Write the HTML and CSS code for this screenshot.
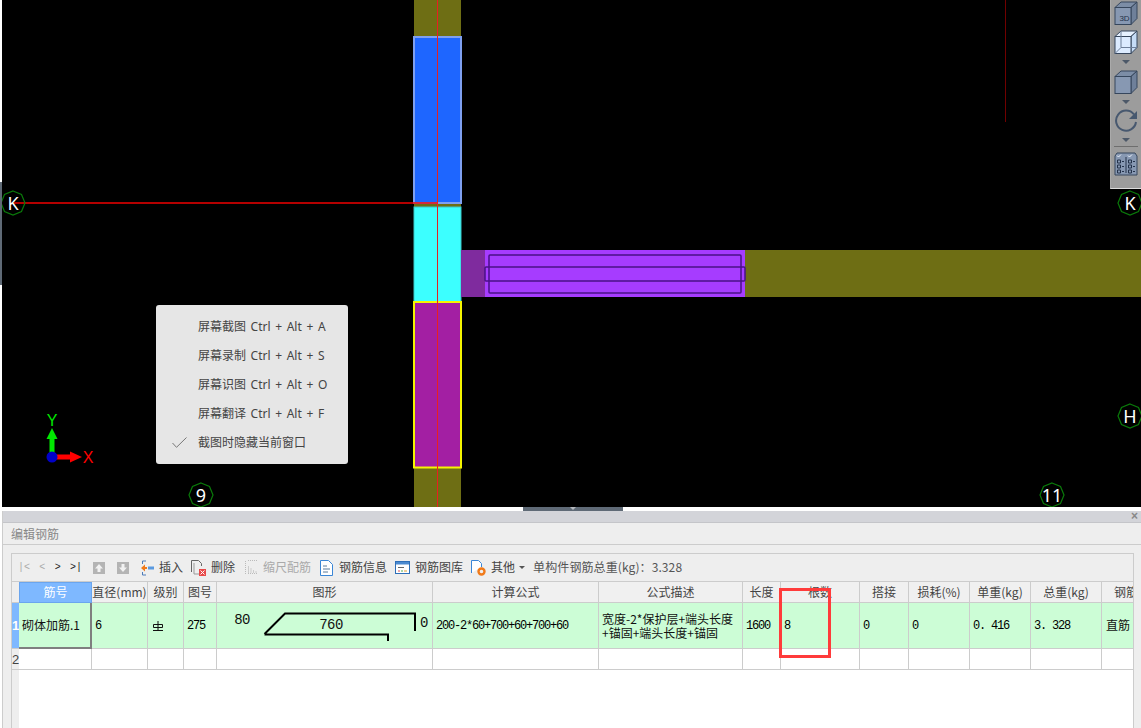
FILE: index.html
```html
<!DOCTYPE html>
<html lang="zh-CN">
<head>
<meta charset="utf-8">
<title>编辑钢筋</title>
<link rel="stylesheet" href="styles.css">
</head>
<body>
<div class="viewport">
  <div class="split-v"><span class="split-v-handle"></span></div>
  <div class="canvas">
    <svg class="drawing" width="1139" height="507" viewBox="2 0 1139 507">
      <rect x="414" y="0" width="47" height="507" fill="#6e6e14"/>
      <rect x="414" y="207" width="47" height="95" fill="#3cffff" stroke="#3cc8c8"/>
      <rect x="414" y="37" width="47" height="166" fill="#1e66ff" stroke="#7fa0f0" stroke-width="2"/>
      <rect x="414" y="302" width="47" height="165.500" fill="#a31fa3" stroke="#f5f500" stroke-width="2"/>
      <rect x="461" y="250" width="680" height="47" fill="#6e6e14"/>
      <rect x="461" y="250" width="24" height="47" fill="#7f2b9e"/>
      <rect x="485" y="250" width="260" height="47" fill="#a63cff"/>
      <rect x="489" y="255" width="252" height="38" fill="none" stroke="#4a1088" stroke-width="1.500" rx="1"/>
      <rect x="485" y="267" width="260" height="14" fill="none" stroke="#4a1088" stroke-width="1.500" rx="1"/>
      <line x1="437.500" y1="0" x2="437.500" y2="507" stroke="#e82020"/>
      <line x1="14" y1="203" x2="437" y2="203" stroke="#f00000" stroke-width="1.500"/>
      <line x1="1005.500" y1="0" x2="1005.500" y2="122" stroke="#700000"/>

      <g class="marker">
        <polygon points="13,191 21.500,194.500 25,203 21.500,211.500 13,215 4.500,211.500 1,203 4.500,194.500"/>
        <text x="13" y="209.500">K</text>
      </g>
      <g class="marker">
        <polygon points="1130,191 1138.500,194.500 1142,203 1138.500,211.500 1130,215 1121.500,211.500 1118,203 1121.500,194.500"/>
        <text x="1130" y="209.500">K</text>
      </g>
      <g class="marker">
        <polygon points="1130,404 1138.500,407.500 1142,416 1138.500,424.500 1130,428 1121.500,424.500 1118,416 1121.500,407.500"/>
        <text x="1130" y="422.500">H</text>
      </g>
      <g class="marker">
        <polygon points="201,483 209.500,486.500 213,495 209.500,503.500 201,507 192.500,503.500 189,495 192.500,486.500"/>
        <text x="201" y="501.500">9</text>
      </g>
      <g class="marker">
        <polygon points="1052,483 1060.500,486.500 1064,495 1060.500,503.500 1052,507 1043.500,503.500 1040,495 1043.500,486.500"/>
        <text x="1052" y="501.500">11</text>
      </g>

      <rect x="49.500" y="437" width="5" height="20" fill="#00e800"/>
      <polygon points="52,428 57.500,439 46.500,439" fill="#00e800"/>
      <rect x="52" y="454.500" width="19" height="5" fill="#ff0000"/>
      <polygon points="82,457 70,451.500 70,462.500" fill="#ff0000"/>
      <circle cx="52" cy="457" r="5.500" fill="#0000c8"/>
      <text class="axis axis-y" x="52" y="426">Y</text>
      <text class="axis axis-x" x="88" y="463">X</text>
    </svg>

    <div class="view-tools">
      <svg class="vt vt-first" width="24" height="24" viewBox="0 0 24 24">
        <path d="M1 6.500 7 1h16l-6 5.500z" fill="#7c8da6" stroke="#36465c"/>
        <path d="M17 6.500 23 1v16.500l-6 6z" fill="#6f809a" stroke="#36465c"/>
        <rect x="1" y="6.500" width="16" height="17" fill="#8798b2" stroke="#36465c"/>
        <text class="vt-label" x="10.500" y="20">3D</text>
      </svg>
      <svg class="vt vt-wire" width="24" height="24" viewBox="0 0 24 24">
        <path d="M1 6.500 7 1h16l-6 5.500z" fill="#e6f1ff" stroke="#36465c"/>
        <path d="M17 6.500 23 1v16.500l-6 6z" fill="#c6dcf6" stroke="#36465c"/>
        <rect x="1" y="6.500" width="16" height="17" fill="#dcebff" stroke="#36465c"/>
        <path d="M7 1v16.500H23M7 17.500l-6 6" fill="none" stroke="#6f809a"/>
      </svg>
      <span class="caret"></span>
      <svg class="vt vt-solid" width="24" height="24" viewBox="0 0 24 24">
        <path d="M1 6.500 7 1h16l-6 5.500z" fill="#7c8da6" stroke="#36465c"/>
        <path d="M17 6.500 23 1v16.500l-6 6z" fill="#6f809a" stroke="#36465c"/>
        <rect x="1" y="6.500" width="16" height="17" fill="#8798b2" stroke="#36465c"/>
      </svg>
      <span class="caret"></span>
      <svg class="vt vt-rotate" width="24" height="24" viewBox="0 0 24 24">
        <path d="M20 6.500A10 10 0 1 0 22 14" fill="none" stroke="#47586f" stroke-width="2"/>
        <path d="M23 3v8h-8z" fill="#47586f"/>
      </svg>
      <span class="caret"></span>
      <span class="vt-sep"></span>
      <svg class="vt" width="24" height="24" viewBox="0 0 24 24">
        <path d="M1 4 3 1h18l2 3v19H1z" fill="#8798b2" stroke="#36465c"/>
        <path d="M12 5v16" stroke="#24324a"/>
        <path d="M3 3.500l1.500 1.500L7 2.500M14 3.500l1.500 1.500L18 2.500" fill="none" stroke="#eef3fa"/>
        <path d="M3.500 8h3v3h-3zM3.500 13h3v3h-3zM3.500 18h3v3h-3zM14.500 8h3v3h-3zM14.500 13h3v3h-3zM14.500 18h3v3h-3z" fill="none" stroke="#24324a"/>
        <path d="M8 9.500h2M8 14.500h2M8 19.500h2M19 9.500h2M19 14.500h2M19 19.500h2" stroke="#24324a"/>
      </svg>
    </div>

    <ul class="shot-menu">
      <li class="shot-item">屏幕截图 Ctrl + Alt + A</li>
      <li class="shot-item">屏幕录制 Ctrl + Alt + S</li>
      <li class="shot-item">屏幕识图 Ctrl + Alt + O</li>
      <li class="shot-item">屏幕翻译 Ctrl + Alt + F</li>
      <li class="shot-item shot-checked">
        <svg class="shot-check" width="15" height="11" viewBox="0 0 15 11"><path d="M.5 6l4 4.300L14.500.5" fill="none" stroke="#777"/></svg>
        截图时隐藏当前窗口
      </li>
    </ul>
  </div>
</div>

<div class="split-h"><span class="split-h-handle"></span></div>

<section class="panel">
  <div class="panel-strip"><span class="panel-close">×</span></div>
  <h1 class="panel-title">编辑钢筋</h1>
  <div class="frame">
    <div class="toolbar">
      <div class="nav">
        <span class="nav-off">|&lt;</span>
        <span class="nav-off">&lt;</span>
        <span>&gt;</span>
        <span>&gt;|</span>
      </div>
      <div class="steps">
        <svg width="12" height="12" viewBox="0 0 12 12"><rect width="12" height="12" fill="#b4b4b4"/><path d="M6 2 10 6.500H7.500V10h-3V6.500H2z" fill="#f2f2f2"/></svg>
        <svg width="12" height="12" viewBox="0 0 12 12"><rect width="12" height="12" fill="#b4b4b4"/><path d="M6 10 10 5.500H7.500V2h-3v3.500H2z" fill="#f2f2f2"/></svg>
      </div>
      <button class="tool"><svg class="ic-s" width="13" height="16" viewBox="0 0 13 16"><path d="M1.500 1H5M1.500 15H5M1.500 1v3M1.500 12v3" stroke="#4a7ab8" fill="none"/><path d="M0 8 4 4.500V7h2v2H4v2.500z" fill="#f07a1a"/><rect x="7" y="6.500" width="6" height="3" fill="#5a9ae0"/></svg>插入</button>
      <button class="tool"><svg class="ic-m" width="15" height="16" viewBox="0 0 15 16"><path d="M.5 12V.5h7l3 3V6" fill="none" stroke="#666"/><path d="M3 3v11h5" fill="none" stroke="#999"/><rect x="8" y="9" width="7" height="7" fill="#e84a4a"/><path d="M9.500 10.500l4 4M13.500 10.500l-4 4" stroke="#fff"/></svg>删除</button>
      <button class="tool tool-off"><svg class="ic-m" width="15" height="14" viewBox="0 0 15 14"><path d="M2.500 1v13M14 .5H5M5 13.500h10" fill="none" stroke="#bbb" stroke-dasharray="1 1"/><path d="M5.500 6v7M8 8v5M10.500 10v3M13 11v2" stroke="#ccc"/></svg>缩尺配筋</button>
      <button class="tool"><svg class="ic-m" width="15" height="16" viewBox="0 0 15 16"><path d="M1.500.5h8l4 4v11h-12z" fill="#fff" stroke="#3b86d6"/><path d="M4 6h4M4 9h7M4 12h5" stroke="#5a7a9a"/></svg>钢筋信息</button>
      <button class="tool"><svg class="ic-m" width="15" height="13" viewBox="0 0 15 13"><rect x=".5" y=".5" width="14" height="12" fill="#fff" stroke="#2e6fb8"/><rect x="1" y="1" width="13" height="2.500" fill="#4b8ad0"/><path d="M3 6.500h6" stroke="#666"/><path d="M3 10h2" stroke="#e05050"/><path d="M6 10h2" stroke="#50b050"/><path d="M9 10h3" stroke="#e0a030"/></svg>钢筋图库</button>
      <button class="tool"><svg class="ic-m" width="15" height="16" viewBox="0 0 15 16"><path d="M.5 13V.5h7l3 3V7" fill="#fff" stroke="#3b86d6"/><circle cx="10.500" cy="11.500" r="3" fill="none" stroke="#f07a1a" stroke-width="2.400"/></svg>其他</button>
      <span class="drop"></span>
      <span class="total">单构件钢筋总重(kg)：3.328</span>
    </div>
    <div class="sheet">
      <table class="grid">
        <colgroup>
          <col class="c-row"><col class="c-no"><col class="c-dia"><col class="c-lv"><col class="c-fig">
          <col class="c-shape"><col class="c-calc"><col class="c-desc"><col class="c-len"><col class="c-count">
          <col class="c-lap"><col class="c-loss"><col class="c-unit"><col class="c-sum"><col class="c-type">
        </colgroup>
        <thead>
          <tr>
            <th class="corner"></th>
            <th class="head-on">筋号</th>
            <th>直径(mm)</th>
            <th>级别</th>
            <th>图号</th>
            <th>图形</th>
            <th>计算公式</th>
            <th>公式描述</th>
            <th>长度</th>
            <th>根数</th>
            <th>搭接</th>
            <th>损耗(%)</th>
            <th>单重(kg)</th>
            <th>总重(kg)</th>
            <th class="head-clip">钢筋</th>
          </tr>
        </thead>
        <tbody>
          <tr class="row-on">
            <td class="rowno rowno-on">1</td>
            <td class="cell-cur">砌体加筋.1</td>
            <td class="num">6</td>
            <td class="sym"><svg width="10" height="10" viewBox="0 0 10 10"><path d="M.5 3.500h9v3h-9zM5 0v9M0 9.500h10" fill="none" stroke="#111"/></svg></td>
            <td class="num">275</td>
            <td class="shape">
              <svg class="bend" width="215" height="45" viewBox="0 0 215 45">
                <path d="M47.500 31 68 10.500H198V28M47.500 31.500H171V38" fill="none" stroke="#000" stroke-width="2"/>
                <text class="bend-t" x="25" y="21">80</text>
                <text class="bend-t" x="114" y="26">760</text>
                <text class="bend-t" x="207" y="24">0</text>
              </svg>
            </td>
            <td class="num">200-2*60+700+60+700+60</td>
            <td class="desc">宽度-2*保护层+端头长度+锚固+端头长度+锚固</td>
            <td class="num">1600</td>
            <td class="num">8</td>
            <td class="num">0</td>
            <td class="num">0</td>
            <td class="num">0. 416</td>
            <td class="num">3. 328</td>
            <td class="txt">直筋</td>
          </tr>
          <tr class="row-empty">
            <td class="rowno">2</td>
            <td></td><td></td><td></td><td></td><td></td><td></td><td></td>
            <td></td><td></td><td></td><td></td><td></td><td></td><td></td>
          </tr>
        </tbody>
      </table>
    </div>
  </div>
  <div class="note-box"></div>
</section>
</body>
</html>
```

FILE: styles.css
```css
* { box-sizing: border-box; }

html, body {
  margin: 0;
  width: 1141px;
  height: 728px;
  overflow: hidden;
  background: #fff;
  font: 12px/1.2 "Noto Sans CJK SC", "Noto Sans", sans-serif;
  color: #333;
}

.viewport { display: flex; height: 507px; }

.split-v { position: relative; width: 2px; background: #fff; }
.split-v-handle {
  position: absolute;
  left: 0;
  top: 182px;
  width: 2px;
  height: 103px;
  background: #5f6a76;
}

.canvas { position: relative; width: 1139px; background: #000; overflow: hidden; }
.drawing { display: block; }

.marker polygon { fill: #000; fill-opacity: 0; stroke: #0a7a0a; stroke-width: 1.200; }
.marker text {
  fill: #fff;
  font: 18px "Noto Sans", sans-serif;
  text-anchor: middle;
}

.axis { font: 16px "Liberation Sans", sans-serif; text-anchor: middle; }
.axis-y { fill: #00e800; }
.axis-x { fill: #ff0000; }

.view-tools {
  position: absolute;
  right: 0;
  top: 0;
  width: 31px;
  height: 189px;
  padding-top: 1px;
  display: flex;
  flex-direction: column;
  align-items: center;
  background: #9c9c9c;
  border-left: 1px solid #aaa;
  border-bottom: 1px solid #ddd;
}
.vt { display: block; flex: none; }
.vt-wire { margin-top: 5px; }
.vt-solid { margin-top: 6px; }
.vt-rotate { margin-top: 4px; }
.vt-label { font: 8px "Liberation Sans", sans-serif; fill: #24324a; text-anchor: middle; }
.caret {
  flex: none;
  margin-top: 6px;
  width: 0;
  height: 0;
  border-left: 4px solid transparent;
  border-right: 4px solid transparent;
  border-top: 4px solid #4c5868;
}
.vt-sep { flex: none; width: 24px; height: 1px; margin: 4px 0 5px; background: #6e6e6e; }

.shot-menu {
  position: absolute;
  left: 154px;
  top: 305px;
  width: 192px;
  height: 159px;
  margin: 0;
  padding: 7px 0 0 42px;
  list-style: none;
  background: #e6e6e6;
  border-radius: 3px;
  color: #444;
}
.shot-item {
  height: 29px;
  line-height: 29px;
  position: relative;
  font-family: "Noto Sans", "Noto Sans CJK SC", sans-serif;
  word-spacing: 1.500px;
}
.shot-check { position: absolute; left: -26px; top: 9px; }

.split-h { position: relative; height: 4px; background: #fff; }
.split-h-handle {
  position: absolute;
  left: 523px;
  top: 0;
  width: 100px;
  height: 4px;
  background: #5f6a76;
}
.split-h-handle::after {
  content: "";
  position: absolute;
  left: 47px;
  top: 0;
  border-left: 3px solid transparent;
  border-right: 3px solid transparent;
  border-top: 3px solid #b5b9be;
}

.panel {
  position: relative;
  height: 217px;
  margin-left: 2px;
  background: #eee;
  border-left: 1px solid #ccc;
  overflow: hidden;
}
.panel-strip {
  position: relative;
  height: 12px;
  background: #d3d4d9;
  border-bottom: 1px solid #c4c5c9;
}
.panel-close {
  position: absolute;
  right: 3px;
  top: 0;
  font: bold 12px/11px "Liberation Sans", sans-serif;
  color: #888;
}
.panel-title {
  margin: 0;
  height: 22px;
  padding-left: 8px;
  font: 12px/22px "Noto Sans CJK SC", sans-serif;
  color: #888;
  border-bottom: 1px solid #ccc;
}

.frame {
  width: 1123px;
  height: 180px;
  margin: 8px 0 0 8px;
  background: #eee;
  border: 1px solid #ccc;
  overflow: hidden;
}

.toolbar {
  display: flex;
  align-items: center;
  gap: 8px;
  height: 28px;
  padding-left: 6px;
  background: #eee;
  border-bottom: 1px solid #ccc;
  color: #444;
}
.nav {
  display: flex;
  width: 67px;
  justify-content: space-between;
  padding-right: 3px;
  font: 10px "Liberation Mono", monospace;
  color: #222;
}
.nav-off { color: #aaa; }
.steps { display: flex; gap: 12px; margin-right: 4px; }
.steps svg { display: block; }
.tool {
  display: flex;
  align-items: center;
  gap: 5px;
  padding: 0;
  border: 0;
  background: none;
  font: inherit;
  color: inherit;
}
.tool svg { display: block; flex: none; }
.tool-off { color: #aaa; }
.drop {
  margin-left: -4px;
  border-left: 3px solid transparent;
  border-right: 3px solid transparent;
  border-top: 3px solid #555;
}
.total { white-space: nowrap; color: #555; letter-spacing: .1px; }

.sheet {
  height: 151px;
  background: linear-gradient(to right, #eee 7px, #fff 7px);
}
.grid {
  table-layout: fixed;
  width: 1152px;
  border-collapse: separate;
  border-spacing: 0;
}
.c-row { width: 7px; }
.c-no { width: 73px; }
.c-dia { width: 56px; }
.c-lv { width: 36px; }
.c-fig { width: 33px; }
.c-shape { width: 216px; }
.c-calc { width: 166px; }
.c-desc { width: 144px; }
.c-len { width: 38px; }
.c-count { width: 79px; }
.c-lap { width: 49px; }
.c-loss { width: 61px; }
.c-unit { width: 61px; }
.c-sum { width: 71px; }
.c-type { width: 62px; }

.grid th {
  height: 21px;
  padding: 0;
  font-weight: 400;
  color: #444;
  background: #f0f0f0;
  border-right: 1px solid #ccc;
  border-bottom: 1px solid #ccc;
  white-space: nowrap;
  overflow: hidden;
}
.grid th.corner { border-right: 0; background: #eee; }
.grid th.head-on {
  background: #7eb8ff;
  color: #fff;
  border: 1px solid #6aa5ee;
}
.grid th.head-clip { text-align: left; padding-left: 12px; }

.grid td {
  padding: 0 0 0 3px;
  border-right: 1px solid #ccc;
  border-bottom: 1px solid #ccc;
  white-space: nowrap;
  overflow: hidden;
  color: #111;
}
.row-on td { height: 46px; background: #ccfdd6; }
.row-empty td { height: 21px; background: #fff; }

.grid td.rowno {
  padding: 0;
  text-align: center;
  font: 13px/1 "Liberation Sans", sans-serif;
  background: #eee;
  border-right: 0;
  color: #444;
}
.grid td.rowno-on { background: #7eb8ff; color: #fff; font-weight: 700; }
.grid td.cell-cur {
  border-right: 2px solid #7f7f7f;
  border-bottom: 2px solid #7f7f7f;
}
.grid td.num {
  font: 12px "Liberation Mono", monospace;
  letter-spacing: -1.200px;
  color: #000;
}
.grid td.sym { padding-left: 5px; }
.sym svg { display: block; }
.grid td.shape { padding: 0; overflow: visible; }
.bend { display: block; }
.bend-t {
  font: 14px "Liberation Mono", monospace;
  letter-spacing: -.6px;
  fill: #111;
  text-anchor: middle;
}
.grid td.desc { white-space: normal; line-height: 14px; word-break: break-all; padding-right: 2px; }
.grid td.txt { padding-left: 4px; }

.note-box {
  position: absolute;
  left: 776px;
  top: 77px;
  width: 52px;
  height: 70px;
  border: 3px solid #ff3b3b;
}
```
